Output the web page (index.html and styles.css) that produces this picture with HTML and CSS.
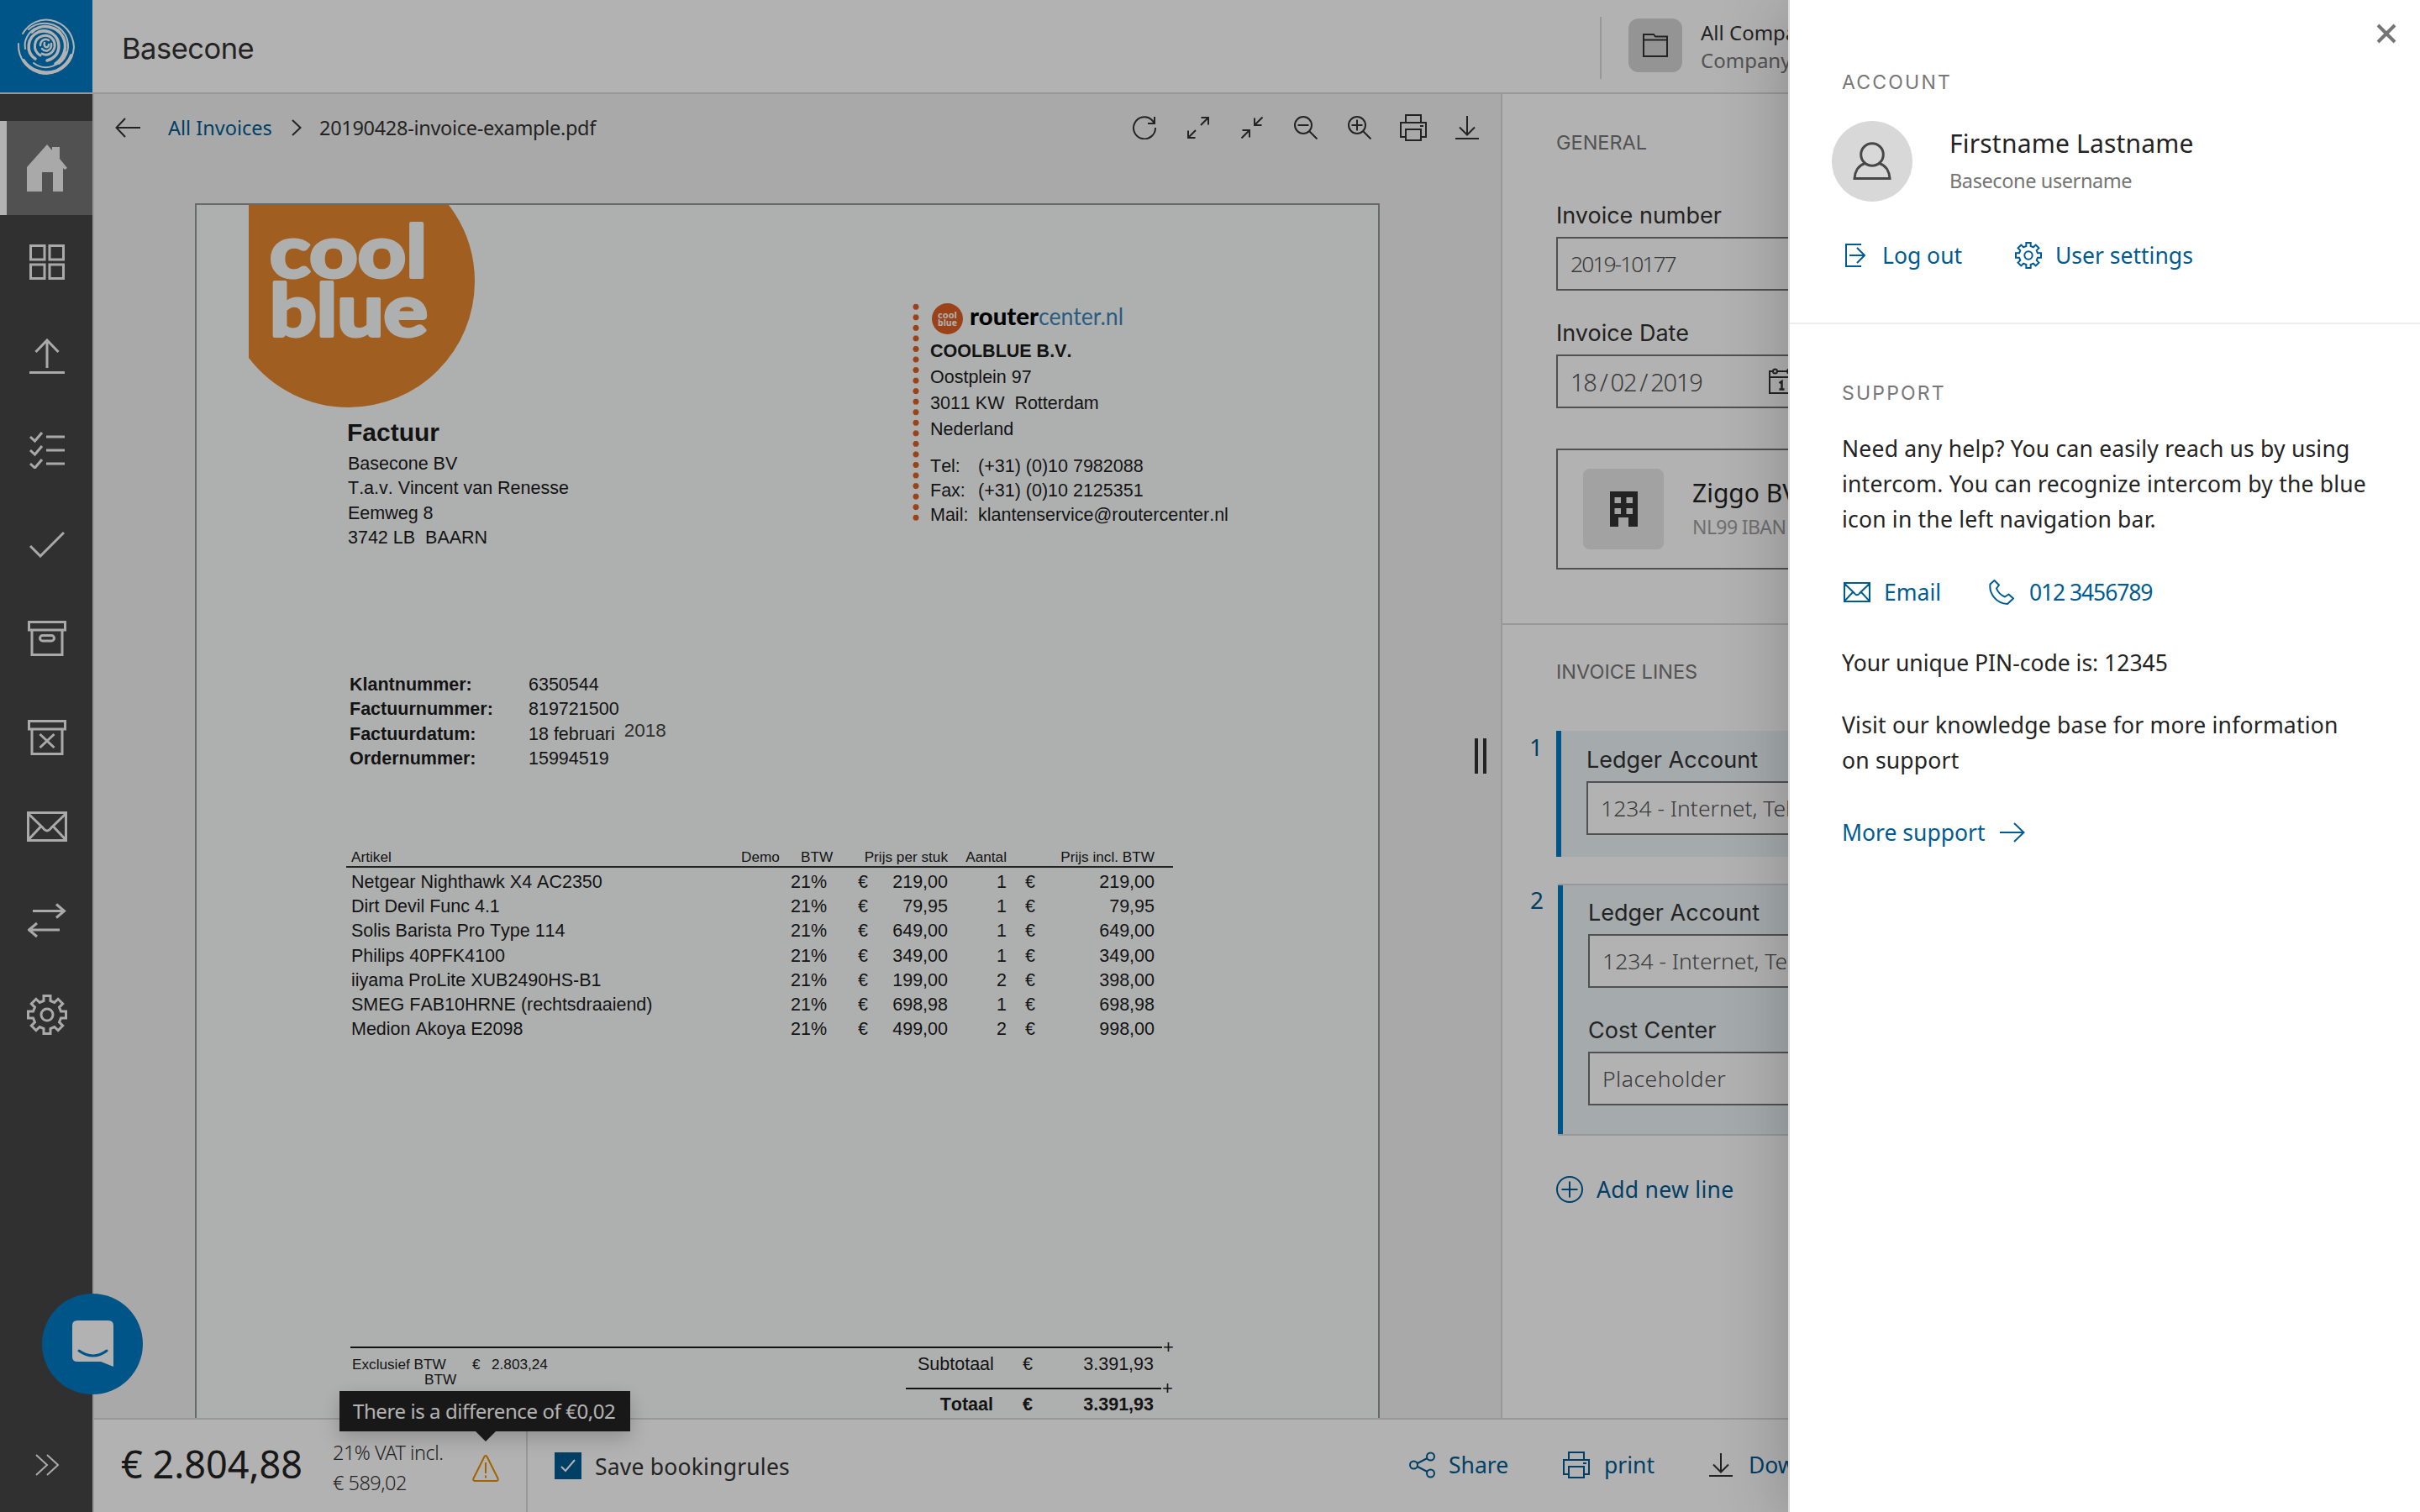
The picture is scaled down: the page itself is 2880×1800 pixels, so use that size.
FILE: index.html
```html
<!DOCTYPE html>
<html lang="en">
<head>
    <meta charset="UTF-8">
    <meta name="viewport" content="width=device-width, initial-scale=1.0">
    <title>Basecone</title>
    <link rel="stylesheet" href="styles.css">
</head>
<body>
    <!-- Shared icons -->
    <svg class="sprite" width="0" height="0">
        <symbol id="gear" viewBox="0 0 48 48">
            <path d="M20 7.5V1.5H28V7.5L32.8 9.5 37.1 5.3 42.7 10.9 38.5 15.2 40.5 20H46.5V28H40.5L38.5 32.8 42.7 37.1 37.1 42.7 32.8 38.5 28 40.5V46.5H20V40.5L15.2 38.5 10.9 42.7 5.3 37.1 9.5 32.8 7.5 28H1.5V20H7.5L9.5 15.2 5.3 10.9 10.9 5.3 15.2 9.5Z"/>
            <circle cx="24" cy="24" r="7"/>
        </symbol>
        <symbol id="mail" viewBox="0 0 48 36">
            <path d="M1.5 1.5H46.5V34.5H1.5ZM2 3L19 19.5Q24 26.500 29 19.500L46 3M2 33.500L16.500 18M46 33.500L31.500 18"/>
        </symbol>
        <symbol id="print" viewBox="0 0 32 32">
            <path d="M7 10V1H25V10M7 27H1V10H31V27H25M7 18H25V31H7ZM24 14H28"/>
        </symbol>
        <symbol id="download" viewBox="0 0 28 28">
            <path d="M14 0V22M5 13.500L14 22.500 23 13.500M0 27H28"/>
        </symbol>
    </svg>

    <div class="app">
        <header class="topbar">
            <div class="logo">
                <svg width="70" height="70" viewBox="0 0 70 70" fill="none" stroke="#fff" stroke-linecap="round">
                    <path stroke-width="2" d="M7 20C15 7 28 2 40 4C56 7 67 19 68 36C67 54 53 67 35 68"/>
                    <path stroke-width="4" d="M8 52C16 64 32 70 48 64C56 60 62 54 65 46"/>
                    <path stroke-width="2" d="M2 32C1 50 14 66 33 68M14 15C26 4 48 5 58 22C64 34 61 48 50 56"/>
                    <path stroke-width="3.500" d="M18 18C30 7 48 11 55 24C61 36 56 49 46 56"/>
                    <path stroke-width="2" d="M10 38C8 28 14 18 22 14M20 55C34 66 54 58 59 42"/>
                    <path stroke-width="3.500" d="M22 50C10 42 12 24 26 18C38 14 50 22 50 35C50 44 44 50 36 52"/>
                    <path stroke-width="3" d="M28 46C18 40 20 26 30 23C40 20 46 28 45 36C43 44 36 47 30 44"/>
                    <path stroke-width="2.500" d="M28 34C28 28 34 25 38 28M41 32C42 40 34 43 30 38M33 31C31 37 38 38 38 33"/>
                </svg>
            </div>
            <h1 class="title">Basecone</h1>
            <div class="company">
                <div class="company-icon">
                    <svg width="30" height="28" viewBox="0 0 30 28" fill="none" stroke="#333" stroke-width="2"><path d="M1 27V1H13L15 3.500H29V27ZM1 7.500H29"/></svg>
                </div>
                <div class="company-text">
                    <div>All Companies</div>
                    <div class="muted">Company name</div>
                </div>
            </div>
        </header>

        <div class="main">
            <nav class="sidebar">
                <a class="nav-item active">
                    <svg width="48" height="56" viewBox="0 0 48 56" fill="#f3f3f3"><path d="M0 56V27L24 0 30 7V3H39V17L48 28 45 30 43 28V56H31V33H18V56Z"/></svg>
                </a>
                <a class="nav-item"><svg width="42" height="42" viewBox="0 0 42 42"><path d="M1.500 1.500H18V18H1.500ZM24 1.500H40.500V18H24ZM1.500 24H18V40.500H1.500ZM24 24H40.500V40.500H24Z"/></svg></a>
                <a class="nav-item"><svg width="42" height="42" viewBox="0 0 42 42"><path d="M21 35V2M7.500 16L21 2 34.500 16M0 40.500H42"/></svg></a>
                <a class="nav-item"><svg width="42" height="44" viewBox="0 0 42 44"><path d="M1 6L6.500 11 15 1M1 22L6.500 27 15 17M1 38L6.500 43 15 33M20 6H42M20 22H42M20 38H42"/></svg></a>
                <a class="nav-item"><svg width="42" height="32" viewBox="0 0 42 32"><path d="M1 18L13 30 41 2"/></svg></a>
                <a class="nav-item"><svg width="46" height="42" viewBox="0 0 46 42"><path d="M1.500 1.500H44.500V11H1.500ZM5 11V40.500H41V11"/><rect x="14.500" y="17.500" width="17" height="6.500" rx="3.200"/></svg></a>
                <a class="nav-item low"><svg width="46" height="42" viewBox="0 0 46 42"><path d="M1.500 1.500H44.500V11H1.500ZM5 11V40.500H41V11M14.500 17L31.500 33M31.500 17L14.500 33"/></svg></a>
                <a class="nav-item"><svg width="48" height="36"><use href="#mail"/></svg></a>
                <a class="nav-item"><svg width="46" height="42" viewBox="0 0 46 42"><path d="M6 9.500H43M34 1.500L43.500 9.500 34 17.500M38 32H2M11 24L1.500 32 11 40"/></svg></a>
                <a class="nav-item"><svg width="48" height="48"><use href="#gear"/></svg></a>
                <a class="nav-item expand"><svg width="28" height="26" viewBox="0 0 28 26"><path d="M1 1L14 13 1 25M14 1L27 13 14 25"/></svg></a>
            </nav>

            <div class="workspace">
                <div class="columns">
                    <section class="viewer">
                        <div class="viewer-bar">
                            <svg class="back" width="30" height="24" viewBox="0 0 30 24"><path d="M30 12H1.500M12 1L1.500 12 12 23"/></svg>
                            <a class="crumb link">All Invoices</a>
                            <svg class="sep" width="12" height="20" viewBox="0 0 12 20"><path d="M1 1L10.500 10 1 19"/></svg>
                            <span class="file">20190428-invoice-example.pdf</span>
                            <div class="tools">
                                <span><svg width="28" height="28" viewBox="0 0 28 28"><path d="M27 14A13 13 0 1 1 22.500 4.500L25.500 8M26 1V9H18"/></svg></span>
                                <span><svg width="26" height="26" viewBox="0 0 26 26"><path d="M16 10L25 1M16.500 1H25V9.500M10 16L1 25M9.500 25H1V16.500"/></svg></span>
                                <span><svg width="26" height="26" viewBox="0 0 26 26"><path d="M25.500 .500L16 10M16 1.500V10H24.500M.500 25.500L10 16M10 24.500V16H1.500"/></svg></span>
                                <span><svg width="28" height="28" viewBox="0 0 28 28"><circle cx="11" cy="11" r="10"/><path d="M18 18L27.500 27.500M4.500 11H17.500"/></svg></span>
                                <span><svg width="28" height="28" viewBox="0 0 28 28"><circle cx="11" cy="11" r="10"/><path d="M18 18L27.500 27.500M4.500 11H17.500M11 4.500V17.500"/></svg></span>
                                <span><svg width="32" height="32"><use href="#print"/></svg></span>
                                <span><svg width="28" height="28"><use href="#download"/></svg></span>
                            </div>
                        </div>

                        <div class="viewer-body">
                            <div class="page">
                                <div class="page-head">
                                    <div class="sender">
                                        <svg class="coolblue" width="270" height="242" viewBox="296 244 270 242">
                                            <path fill="#e5882e" d="M296 244H534A150 150 0 0 1 565 335A150 150 0 0 1 415 485A150 150 0 0 1 296 426Z"/>
                                            <text class="cb-text" x="321" y="330" textLength="187" lengthAdjust="spacingAndGlyphs">cool</text>
                                            <text class="cb-text" x="321" y="400" textLength="188" lengthAdjust="spacingAndGlyphs">blue</text>
                                        </svg>
                                        <h2>Factuur</h2>
                                        <address>Basecone BV<br>T.a.v. Vincent van Renesse<br>Eemweg 8<br>3742 LB &nbsp;BAARN</address>
                                    </div>
                                    <div class="seller">
                                        <div class="dots"></div>
                                        <div>
                                            <svg class="router" width="240" height="42" viewBox="0 0 240 42">
                                                <circle cx="20.500" cy="18.500" r="18.500" fill="#de5f24"/>
                                                <text class="mini" x="9" y="17.500" textLength="23" lengthAdjust="spacingAndGlyphs">cool</text>
                                                <text class="mini" x="9" y="27" textLength="23" lengthAdjust="spacingAndGlyphs">blue</text>
                                                <text class="brand-bold" x="47" y="26" textLength="82" lengthAdjust="spacingAndGlyphs">router</text>
                                                <text class="brand-thin" x="129" y="26" textLength="101" lengthAdjust="spacingAndGlyphs">center.nl</text>
                                            </svg>
                                            <div class="seller-lines"><b>COOLBLUE B.V.</b><br>Oostplein 97<br>3011 KW &nbsp;Rotterdam<br>Nederland</div>
                                            <div class="contact">
                                                <span>Tel:</span><span>(+31) (0)10 7982088</span>
                                                <span>Fax:</span><span>(+31) (0)10 2125351</span>
                                                <span>Mail:</span><span>klantenservice@routercenter.nl</span>
                                            </div>
                                        </div>
                                    </div>
                                </div>

                                <div class="meta">
                                    <b>Klantnummer:</b><span>6350544</span>
                                    <b>Factuurnummer:</b><span>819721500</span>
                                    <b>Factuurdatum:</b><span>18 februari<span class="year">2018</span></span>
                                    <b>Ordernummer:</b><span>15994519</span>
                                </div>

                                <div class="items">
                                    <div class="row row-head"><span>Artikel</span><span>Demo</span><span class="btw">BTW</span><span class="right">Prijs per stuk</span><span class="right">Aantal</span><span class="right">Prijs incl. BTW</span></div>
                                    <div class="row"><span>Netgear Nighthawk X4 AC2350</span><span></span><span>21%</span><span class="money"><i>€</i>219,00</span><span class="right">1</span><span class="money total"><i>€</i>219,00</span></div>
                                    <div class="row"><span>Dirt Devil Func 4.1</span><span></span><span>21%</span><span class="money"><i>€</i>79,95</span><span class="right">1</span><span class="money total"><i>€</i>79,95</span></div>
                                    <div class="row"><span>Solis Barista Pro Type 114</span><span></span><span>21%</span><span class="money"><i>€</i>649,00</span><span class="right">1</span><span class="money total"><i>€</i>649,00</span></div>
                                    <div class="row"><span>Philips 40PFK4100</span><span></span><span>21%</span><span class="money"><i>€</i>349,00</span><span class="right">1</span><span class="money total"><i>€</i>349,00</span></div>
                                    <div class="row"><span>iiyama ProLite XUB2490HS-B1</span><span></span><span>21%</span><span class="money"><i>€</i>199,00</span><span class="right">2</span><span class="money total"><i>€</i>398,00</span></div>
                                    <div class="row"><span>SMEG FAB10HRNE (rechtsdraaiend)</span><span></span><span>21%</span><span class="money"><i>€</i>698,98</span><span class="right">1</span><span class="money total"><i>€</i>698,98</span></div>
                                    <div class="row"><span>Medion Akoya E2098</span><span></span><span>21%</span><span class="money"><i>€</i>499,00</span><span class="right">2</span><span class="money total"><i>€</i>998,00</span></div>
                                </div>

                                <div class="rule"><hr><span>+</span></div>
                                <div class="sums">
                                    <div class="excl">
                                        <div><span>Exclusief BTW</span><span>€</span><span>2.803,24</span></div>
                                        <div class="excl-btw">BTW</div>
                                    </div>
                                    <div class="totals">
                                        <div class="sum"><span>Subtotaal</span><span>€</span><span>3.391,93</span></div>
                                        <div class="rule"><hr><span>+</span></div>
                                        <div class="sum bold"><span>Totaal</span><span>€</span><span>3.391,93</span></div>
                                    </div>
                                </div>
                            </div>
                            <div class="handle"></div>
                        </div>
                    </section>

                    <section class="details">
                        <div class="general">
                            <h3>GENERAL</h3>
                            <label>Invoice number</label>
                            <div class="field number">2019-10177</div>
                            <label>Invoice Date</label>
                            <div class="field date"><span>18<i>/</i>02<i>/</i>2019</span>
                                <svg width="32" height="32" viewBox="0 0 32 32" fill="none" stroke="#333" stroke-width="2"><path d="M5 4H1V30H31V4H27M10 4H22M1 11H31"/><circle cx="7.500" cy="4" r="2.500"/><circle cx="24.500" cy="4" r="2.500"/><path stroke-width="2.500" d="M12.500 18L15.500 16V26M12.500 25.500H18.500"/></svg>
                            </div>
                            <div class="supplier">
                                <div class="supplier-icon">
                                    <svg width="33" height="42" viewBox="0 0 33 42"><path fill="#333" fill-rule="evenodd" d="M0 0H33V42H22V31H10V42H0ZM5.500 7V14H13V7ZM19.500 7V14H27V7ZM5.500 20V27H13V20ZM19.500 20V27H27V20Z"/></svg>
                                </div>
                                <div>
                                    <div class="supplier-name">Ziggo BV</div>
                                    <div class="supplier-iban">NL99 IBAN</div>
                                </div>
                            </div>
                        </div>
                        <div class="lines">
                            <h3>INVOICE LINES</h3>
                            <div class="line">
                                <span class="num">1</span>
                                <div class="line-box">
                                    <label>Ledger Account</label>
                                    <div class="field">1234 - Internet, Tel</div>
                                </div>
                            </div>
                            <div class="line second">
                                <span class="num">2</span>
                                <div class="line-box">
                                    <label>Ledger Account</label>
                                    <div class="field">1234 - Internet, Tel</div>
                                    <label>Cost Center</label>
                                    <div class="field placeholder">Placeholder</div>
                                </div>
                            </div>
                            <a class="add link">
                                <svg width="32" height="32" viewBox="0 0 32 32"><circle cx="16" cy="16" r="15"/><path d="M16 6.500V25.500M6.500 16H25.500"/></svg>
                                Add new line
                            </a>
                        </div>
                    </section>
                </div>

                <footer class="footer">
                    <div class="amount">€ 2.804,88</div>
                    <div class="vat">21% VAT incl.<br>€ 589,02</div>
                    <div class="warning">
                        <svg width="32" height="32" viewBox="0 0 32 32" fill="none" stroke="#ea8f00" stroke-width="2" stroke-linejoin="round"><path d="M14.500 2Q16 0 17.500 2L30.500 28Q31.500 31 28.500 31H3.500Q.500 31 1.500 28ZM16 9V22M16 24.500V27.500"/></svg>
                        <div class="tooltip">There is a difference of €0,02</div>
                    </div>
                    <div class="rules">
                        <span class="checkbox"><svg width="18" height="16" viewBox="0 0 18 16" fill="none" stroke="#fff" stroke-width="2"><path d="M1 9L6 14 17 1"/></svg></span>
                        <span class="rules-label">Save bookingrules</span>
                    </div>
                    <div class="actions">
                        <a class="share link"><svg width="32" height="32" viewBox="0 0 32 32"><circle cx="5.500" cy="16" r="4.500"/><circle cx="25.500" cy="6" r="4.500"/><circle cx="25.500" cy="26" r="4.500"/><path d="M10 14L21.500 8M10 18L21.500 24"/></svg>Share</a>
                        <a class="print link"><svg width="32" height="32"><use href="#print"/></svg>print</a>
                        <a class="down link"><svg class="dark" width="28" height="28"><use href="#download"/></svg>Download</a>
                    </div>
                </footer>
            </div>
        </div>

        <div class="chat">
            <svg width="50" height="56" viewBox="0 0 50 56"><path fill="#fff" d="M6 0H43Q49 0 49 6V55L34 49H6Q0 49 0 43V6Q0 0 6 0Z"/><path fill="none" stroke="#007ac3" stroke-width="3" stroke-linecap="round" d="M8 36Q25 48 41 36"/></svg>
        </div>
    </div>

    <div class="overlay"></div>

    <aside class="drawer">
        <svg class="close" width="24" height="24" viewBox="0 0 24 24"><path d="M2 2L22 22M22 2L2 22"/></svg>
        <section class="account">
            <h3>ACCOUNT</h3>
            <div class="user">
                <div class="avatar">
                    <svg width="46" height="46" viewBox="0 0 46 46" fill="none" stroke="#474747" stroke-width="3"><circle cx="23" cy="15" r="13.300"/><path d="M14.500 25.500C6 28 2.500 36 2 43.500H44C43.500 36 40 28 31.500 25.500"/></svg>
                </div>
                <div>
                    <div class="user-name">Firstname Lastname</div>
                    <div class="user-sub">Basecone username</div>
                </div>
            </div>
            <div class="user-links">
                <a class="logout link"><svg width="24" height="28" viewBox="0 0 24 28"><path d="M19 1H1V27H19M5 14H23M14 5L23 14 14 23"/></svg>Log out</a>
                <a class="settings link"><svg width="32" height="32"><use href="#gear"/></svg>User settings</a>
            </div>
        </section>
        <section class="support">
            <h3>SUPPORT</h3>
            <p>Need any help? You can easily reach us by using<br>intercom. You can recognize intercom by the blue<br>icon in the left navigation bar.</p>
            <div class="contact-links">
                <a class="email link"><svg width="32" height="24"><use href="#mail"/></svg>Email</a>
                <a class="phone link"><svg width="30" height="30" viewBox="0 0 30 30" stroke-linejoin="round"><path d="M6.500 1L1.500 5.500C0 17 9 28.500 22 29L29 22.500 23.500 17.500 19 20.500C14 18.500 10.500 14.500 9 10.500L12 6.500Z"/></svg>012 3456789</a>
            </div>
            <p class="pin">Your unique PIN-code is: 12345</p>
            <p class="visit">Visit our knowledge base for more information<br>on support</p>
            <a class="more link">More support <svg width="30" height="24" viewBox="0 0 30 24"><path d="M0 12H28.500M17 1L28.500 12 17 23"/></svg></a>
        </section>
    </aside>
</body>
</html>
```
FILE: styles.css
```css
/* Global Styles */
* {
    box-sizing: border-box;
}
body {
    margin: 0;
    width: 2880px;
    height: 1800px;
    overflow: hidden;
    position: relative;
    font-family: "Noto Sans", "Open Sans", sans-serif;
    font-size: 26.5px;
    color: #333;
    background: #fff;
}
h1, h2, h3, p, hr {
    margin: 0;
    font-weight: 400;
}
i {
    font-style: normal;
}
.sprite {
    position: absolute;
}
svg {
    display: block;
    flex: none;
}
.link {
    color: #005b92;
    white-space: nowrap;
}
.link svg {
    fill: none;
    stroke: #005b92;
    stroke-width: 2;
}
.link svg.dark {
    stroke: #333;
}
.muted {
    color: #777;
    padding-top: 1px;
}
.app {
    display: flex;
    flex-direction: column;
    height: 1800px;
}

/* Top bar */
.topbar {
    display: flex;
    height: 112px;
    border-bottom: 2px solid #dadada;
}
.logo {
    width: 110px;
    height: 110px;
    padding: 20px;
    background: #007ac3;
}
.title {
    width: 1794px;
    padding: 5px 0 0 35px;
    font-family: Inter, "Liberation Sans", sans-serif;
    font-size: 34.5px;
    line-height: 106px;
    letter-spacing: -0.5px;
}
.company {
    display: flex;
    gap: 22px;
    height: 74px;
    margin-top: 20px;
    padding: 2px 0 0 32px;
    border-left: 2px solid #dadada;
}
.company-icon {
    display: flex;
    align-items: center;
    justify-content: center;
    width: 64px;
    height: 64px;
    border-radius: 12px;
    background: #d5d5d5;
}
.company-text {
    padding-top: 1px;
    font-size: 24px;
    line-height: 32px;
}

/* Sidebar */
.main {
    display: flex;
    height: 1688px;
}
.sidebar {
    display: flex;
    flex-direction: column;
    width: 112px;
    padding-top: 32px;
    background: #464646;
    border-right: 2px solid #dadada;
}
.nav-item {
    display: flex;
    align-items: center;
    justify-content: center;
    height: 112px;
    padding-left: 2px;
}
.nav-item svg {
    fill: none;
    stroke: #f3f3f3;
    stroke-width: 3;
}
.nav-item.active {
    padding: 0 6px 0 0;
    background: #747474;
    border-left: 8px solid #fff;
}
.nav-item.active svg {
    fill: #f3f3f3;
    stroke: none;
}
.nav-item.low {
    padding-top: 12px;
}
.nav-item.expand {
    margin-top: auto;
}
.nav-item.expand svg {
    stroke-width: 2;
}

/* Document viewer */
.workspace {
    width: 2768px;
}
.columns {
    display: flex;
    height: 1576px;
}
.viewer {
    width: 1676px;
    background: #f3f3f3;
    border-right: 2px solid #dadada;
}
.viewer-bar {
    display: flex;
    align-items: center;
    height: 80px;
    padding: 0 8px 0 25px;
    font-size: 23.5px;
    white-space: nowrap;
}
.viewer-bar svg {
    fill: none;
    stroke: #333;
    stroke-width: 2;
}
.crumb {
    width: 147px;
    margin-left: 33px;
}
.sep {
    margin-right: 21px;
}
.file {
    letter-spacing: -0.3px;
}
.tools {
    display: flex;
    margin-left: auto;
}
.tools span {
    display: flex;
    align-items: center;
    justify-content: center;
    width: 64px;
}
.viewer-body {
    display: flex;
    padding: 50px 0 0 120px;
}
.handle {
    width: 14px;
    height: 42px;
    margin: 637px 0 0 113px;
    border: solid #333;
    border-width: 0 4px;
}

/* Scanned invoice */
.page {
    width: 1410px;
    height: 1446px;
    overflow: hidden;
    background: #fafdfc;
    border: 2px solid #979797;
    border-bottom: 0;
    color: #1c1c1c;
    font-family: "Liberation Sans", Arial, sans-serif;
    font-size: 21.5px;
    font-kerning: none;
    line-height: 29.3px;
    white-space: nowrap;
}
.page-head {
    display: flex;
    height: 557px;
}
.sender {
    width: 852px;
}
.coolblue {
    margin-left: 62px;
}
.cb-text {
    fill: #fafdfc;
    stroke: #fafdfc;
    stroke-width: 4;
    stroke-linejoin: round;
    font: 700 86px Lato, "Open Sans", sans-serif;
}
.sender h2 {
    margin: 12px 0 5px 179px;
    font-size: 30px;
    font-weight: 700;
    line-height: 34px;
}
.sender address {
    margin-left: 180px;
    padding-top: 1px;
    font-style: normal;
}
.seller {
    display: flex;
    gap: 13px;
    padding-top: 117px;
}
.dots {
    width: 8px;
    height: 264px;
    background: radial-gradient(circle at center, #de5f24 3.2px, transparent 3.9px) 0 -2px / 8px 12.56px repeat-y;
}
.router {
    overflow: visible;
}
.mini {
    fill: #fafdfc;
    font: 700 11px "Open Sans", sans-serif;
}
.brand-bold {
    fill: #000;
    font: 900 29px Lato, sans-serif;
}
.brand-thin {
    fill: #3d84b8;
    font: 400 29px Lato, sans-serif;
}
.seller-lines {
    line-height: 31px;
}
.contact {
    display: grid;
    grid-template-columns: 57px auto;
    margin-top: 14px;
    line-height: 29.2px;
}
.meta {
    display: grid;
    grid-template-columns: 213px auto;
    height: 208px;
    padding-left: 182px;
    align-content: start;
}
.year {
    position: relative;
    top: -4px;
    margin-left: 11px;
    color: #444;
    font-size: 22.5px;
    line-height: 20px;
}
.items {
    width: 984px;
    margin-left: 178px;
}
.row {
    display: grid;
    grid-template-columns: 464px 59px 80px 107px 70px 176px;
    padding-left: 6px;
    line-height: 29.2px;
}
.row-head {
    margin-bottom: 3px;
    border-bottom: 2px solid #333;
    font-size: 17.2px;
    line-height: 22px;
}
.right {
    text-align: right;
}
.btw {
    padding-left: 12px;
}
.money {
    display: flex;
    justify-content: space-between;
}
.total {
    padding-left: 22px;
}
.rule {
    display: flex;
    align-items: center;
    gap: 1px;
    height: 20px;
    font-size: 22px;
    line-height: 20px;
}
.rule hr {
    flex: none;
    height: 2px;
    border: 0;
    background: #1c1c1c;
}
.page > .rule {
    margin: 354px 0 0 183px;
}
.page > .rule hr {
    width: 966px;
}
.sums {
    display: flex;
    padding-left: 185px;
}
.excl {
    width: 659px;
    font-size: 17.2px;
    line-height: 18px;
}
.excl div:first-child {
    display: grid;
    grid-template-columns: 143px 23px auto;
    padding-top: 1px;
}
.excl-btw {
    padding-left: 86px;
}
.sum {
    display: grid;
    grid-template-columns: 90px 47px 144px;
    margin: -4px 0 4px;
    padding-left: 14px;
    text-align: right;
}
.totals .rule hr {
    width: 304px;
}
.totals .rule {
    height: 18px;
}
.bold {
    font-weight: 700;
}

/* Invoice details */
.details {
    width: 1092px;
}
.general {
    padding: 42px 64px 64px;
    border-bottom: 2px solid #dadada;
}
.lines {
    padding: 40px 64px 0;
}
h3 {
    color: #777;
    font-family: Inter, sans-serif;
    font-size: 23.5px;
    line-height: 32px;
}
label {
    display: block;
    padding-top: 1px;
    margin-bottom: 7px;
    font-family: Inter, sans-serif;
    font-size: 27px;
    line-height: 36px;
}
.general h3 {
    margin-bottom: 52px;
}
.field {
    display: flex;
    align-items: center;
    height: 64px;
    padding-left: 15px;
    border: 2px solid #747474;
    background: #fff;
    color: #555;
    font-weight: 300;
}
.field + label {
    margin-top: 32px;
}
.number {
    letter-spacing: -2px;
}
.placeholder {
    letter-spacing: 0.5px;
}
.date {
    font-size: 29px;
    letter-spacing: -1.2px;
}
.date i {
    margin: 0 4px;
}
.date span {
    width: 236px;
}
.supplier {
    display: flex;
    align-items: center;
    gap: 34px;
    height: 144px;
    margin-top: 48px;
    padding-left: 30px;
    border: 2px solid #747474;
}
.supplier-icon {
    display: flex;
    align-items: center;
    justify-content: center;
    width: 96px;
    height: 96px;
    border-radius: 8px;
    background: #e8e8e8;
}
.supplier-name {
    margin: -2px 0 2px;
    color: #232323;
    font-size: 30px;
    line-height: 42px;
}
.supplier-iban {
    color: #a0a0a0;
    font-size: 23px;
    letter-spacing: -0.6px;
    line-height: 34px;
}
.line {
    display: flex;
    height: 150px;
    margin: 54px 0 0 -32px;
}
.line .num {
    width: 32px;
    color: #005b92;
    font-size: 28px;
    line-height: 38px;
}
.line-box {
    flex: 1;
    padding: 16px 30px 0;
    border-left: 6px solid #007ac3;
    background: #ecf4f8;
}
.line.second {
    height: 300px;
    margin-top: 32px;
}
.second .num {
    width: 34px;
    padding-left: 1px;
}
.second .line-box {
    padding: 14px 30px 0 36px;
    border-top: 2px solid #dadada;
    border-bottom: 2px solid #dadada;
    border-left: 0;
    box-shadow: inset 6px 0 #007ac3;
}
.add {
    display: flex;
    align-items: center;
    gap: 16px;
    margin-top: 48px;
    height: 32px;
    letter-spacing: 0.3px;
}

/* Footer */
.footer {
    display: flex;
    height: 112px;
    border-top: 2px solid #dadada;
    background: #fff;
    white-space: nowrap;
}
.amount {
    width: 284px;
    padding-left: 32px;
    color: #232323;
    font-size: 45px;
    line-height: 106px;
}
.vat {
    width: 166px;
    padding-top: 21px;
    font-size: 23.5px;
    font-weight: 300;
    letter-spacing: -0.5px;
    line-height: 36px;
}
.warning {
    position: relative;
    width: 66px;
    padding-top: 42px;
    border-right: 2px solid #dadada;
}
.tooltip {
    position: absolute;
    left: -158px;
    top: -34px;
    width: 346px;
    height: 48px;
    padding-left: 16px;
    background: #232323;
    box-shadow: 0 8px 24px rgba(0, 0, 0, 0.2);
    color: #fff;
    font-size: 24px;
    letter-spacing: -0.42px;
    line-height: 47px;
}
.tooltip::after {
    content: "";
    position: absolute;
    left: 162px;
    top: 48px;
    border: 12px solid transparent;
    border-top-color: #232323;
    border-bottom: 0;
}
.rules {
    display: flex;
    align-items: center;
    gap: 16px;
    width: 1049px;
    padding-left: 32px;
}
.rules-label {
    padding-top: 2px;
    letter-spacing: 0.2px;
}
.checkbox {
    display: flex;
    align-items: center;
    justify-content: center;
    width: 32px;
    height: 32px;
    background: #005b92;
}
.actions {
    display: flex;
    padding-bottom: 2px;
}
.actions a {
    display: flex;
    align-items: center;
}
.share {
    gap: 15px;
    width: 183px;
}
.print {
    gap: 17px;
    width: 174px;
}
.down {
    gap: 19px;
}

/* Chat bubble */
.chat {
    position: absolute;
    left: 50px;
    top: 1540px;
    width: 120px;
    height: 120px;
    padding: 32px 0 0 36px;
    border-radius: 50%;
    background: #007ac3;
}

/* Drawer */
.overlay {
    position: absolute;
    inset: 0;
    background: rgba(0, 0, 0, 0.3);
}
.drawer {
    position: absolute;
    top: 0;
    right: 0;
    width: 752px;
    height: 1800px;
    border-left: 2px solid #dadada;
    background: #fff;
    box-shadow: 0 10px 80px rgba(0, 0, 0, 0.24);
    color: #232323;
    font-size: 26.5px;
    white-space: nowrap;
}
.drawer h3 {
    font-size: 23px;
    letter-spacing: 2.2px;
}
.close {
    position: absolute;
    right: 28px;
    top: 28px;
    fill: none;
    stroke: #757575;
    stroke-width: 4;
}
.account {
    height: 386px;
    padding: 82px 0 0 62px;
    border-bottom: 2px solid #ececec;
}
.user {
    display: flex;
    gap: 44px;
    margin: 30px 0 0 -12px;
}
.avatar {
    display: flex;
    align-items: center;
    justify-content: center;
    width: 96px;
    height: 96px;
    border-radius: 50%;
    background: #d8d8d8;
}
.user-name {
    padding-top: 5px;
    font-size: 30px;
    letter-spacing: 0.2px;
    line-height: 44px;
}
.user-sub {
    color: #757575;
    font-size: 23.5px;
    letter-spacing: -0.4px;
    line-height: 44px;
}
.user-links, .contact-links {
    display: flex;
}
.user-links {
    margin-top: 46px;
}
.user-links a, .contact-links a {
    display: flex;
    align-items: center;
    height: 36px;
}
.logout {
    gap: 20px;
    width: 206px;
    padding-left: 4px;
}
.settings {
    gap: 16px;
}
.settings svg {
    stroke-width: 3;
}
.support {
    padding: 66px 0 0 62px;
}
.support p {
    letter-spacing: 0.2px;
    line-height: 42px;
}
.support h3 {
    margin-bottom: 29px;
}
.contact-links {
    margin-top: 48px;
}
.email {
    gap: 16px;
    width: 175px;
    padding-left: 2px;
}
.email svg {
    stroke-width: 3;
}
.phone {
    gap: 18px;
    letter-spacing: -1.1px;
}
.support .pin {
    margin-top: 45px;
    letter-spacing: 0;
}
.support .visit {
    margin-top: 32px;
}
.more {
    display: flex;
    align-items: center;
    gap: 17px;
    margin-top: 44px;
    line-height: 42px;
}
```
